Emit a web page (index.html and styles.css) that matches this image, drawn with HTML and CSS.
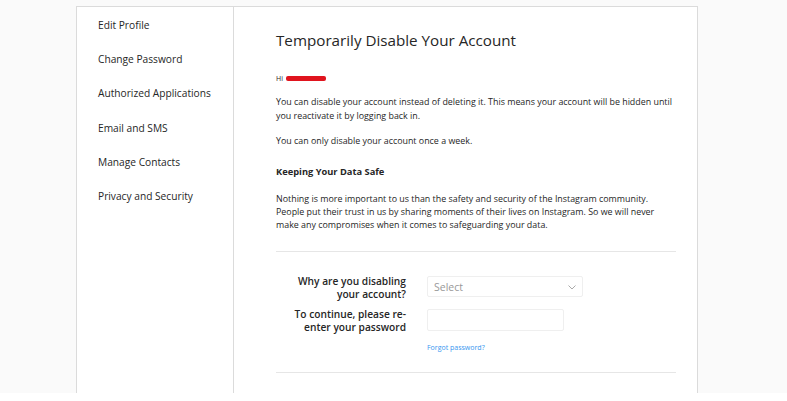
FILE: index.html
```html
<!DOCTYPE html>
<html>
<head>
<meta charset="utf-8">
<link rel="stylesheet" href="styles.css">
</head>
<body>
<div class="page">
  <div class="card">
    <nav class="side">
      <a class="side-item">Edit Profile</a>
      <a class="side-item">Change Password</a>
      <a class="side-item">Authorized Applications</a>
      <a class="side-item">Email and SMS</a>
      <a class="side-item">Manage Contacts</a>
      <a class="side-item">Privacy and Security</a>
    </nav>
    <main class="main">
      <h1 class="title">Temporarily Disable Your Account</h1>
      <p class="greet">Hi <span class="redact"></span></p>
      <p class="txt">You can disable your account instead of deleting it. This means your account will be hidden until<br>you reactivate it by logging back in.</p>
      <p class="txt">You can only disable your account once a week.</p>
      <h2 class="sub">Keeping Your Data Safe</h2>
      <p class="txt txt2">Nothing is more important to us than the safety and security of the Instagram community.<br>People put their trust in us by sharing moments of their lives on Instagram. So we will never<br>make any compromises when it comes to safeguarding your data.</p>
      <hr class="rule rule-top">
      <div class="form">
        <div class="row">
          <label class="lbl">Why are you disabling your account?</label>
          <div class="select"><span>Select</span>
            <svg class="chev" width="8" height="5" viewBox="0 0 8 5"><path d="M0.5 0.5 L4 4 L7.5 0.5" fill="none" stroke="#aaa" stroke-width="1"/></svg>
          </div>
        </div>
        <div class="row row2">
          <label class="lbl">To continue, please re-enter your password</label>
          <div class="field">
            <div class="input"></div>
            <a class="forgot">Forgot password?</a>
          </div>
        </div>
      </div>
      <hr class="rule rule-bot">
    </main>
  </div>
</div>
</body>
</html>
```

FILE: styles.css
```css
html, body { margin: 0; padding: 0; }
body { background: #fff; font-family: "Open Sans", "Noto Sans", sans-serif; color: #262626; }
.page { height: 393px; background: #fafafa; padding-top: 6px; box-sizing: border-box; }
.card {
  margin-left: 76px; width: 622px; height: 387px; box-sizing: border-box;
  background: #fff; border: 1px solid #dbdbdb; border-bottom: none;
  display: flex;
}
.side {
  width: 157px; flex: none; border-right: 1px solid #dbdbdb; box-sizing: border-box;
  display: flex; flex-direction: column; padding-top: 10.5px;
}
.side-item {
  padding-left: 21px; height: 34.4px; font-size: 10.2px; color: #262626; line-height: 15px;
}
.main { flex: 1; padding: 0 21px 0 42px; }
.title { font-size: 15.2px; font-weight: 400; margin: 22px 0 0; line-height: 22px; color: #262626; }
.greet { font-size: 7px; margin: 22px 0 0; line-height: 11px; display: flex; align-items: center; gap: 3px; }
.redact { display: inline-block; width: 40px; height: 5px; background: #e0141e; border-radius: 2px; }
.txt { font-size: 8.9px; line-height: 14px; margin: 11px 0 0; color: #262626; white-space: nowrap; }
.sub { font-size: 9.3px; font-weight: 700; margin: 17px 0 0; line-height: 14px; }
.txt2 { line-height: 13px; margin-top: 13px; }
.rule { border: none; border-top: 1px solid #e6e6e6; margin: 0; }
.rule-top { margin-top: 20px; }
.form { padding-top: 23px; }
.row { display: flex; gap: 21px; align-items: flex-start; }
.row2 { margin-top: 7px; }
.lbl { width: 130px; flex: none; text-align: right; font-size: 10.2px; font-weight: 600; line-height: 13px; color: #262626; }
.select {
  width: 156px; height: 21px; box-sizing: border-box; border: 1px solid #efefef; border-radius: 2px;
  display: flex; align-items: center; justify-content: space-between; padding: 0 6px 0 6px;
  font-size: 10.5px; color: #999; margin-top: 1px; background: #fff;
}
.chev { margin-top: 1px; }
.field { display: flex; flex-direction: column; }
.input { width: 137px; height: 22px; box-sizing: border-box; border: 1px solid #efefef; border-radius: 2px; margin-top: 1px; }
.forgot { font-size: 7px; color: #3897f0; margin-top: 12px; line-height: 10px; }
.rule-bot { margin-top: 19px; }
```
